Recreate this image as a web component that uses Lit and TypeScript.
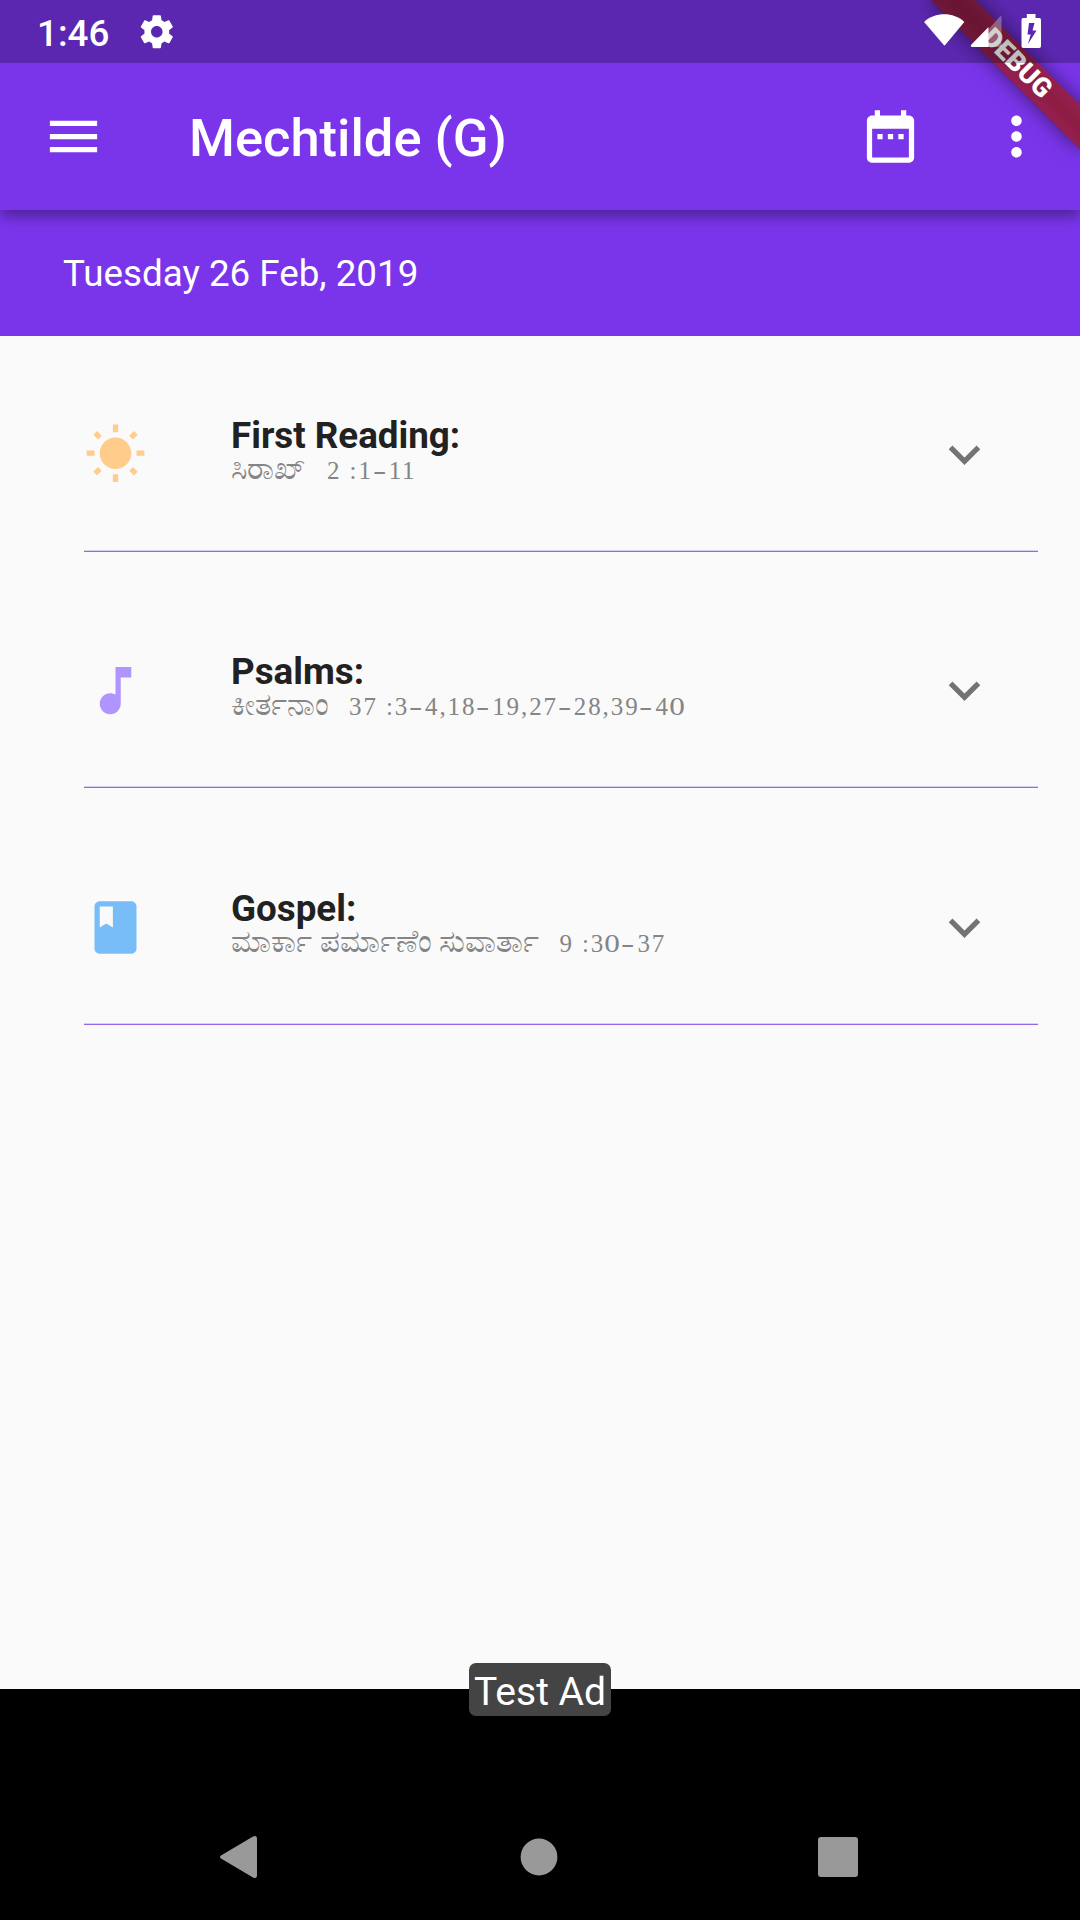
import { LitElement, html, css, svg } from "lit";
import { customElement, property } from "lit/decorators.js";

const icons: Record<string, string> = {
  menu: "M3 18h18v-2H3v2zm0-5h18v-2H3v2zm0-7v2h18V6H3z",
  dateRange:
    "M9 11H7v2h2v-2zm4 0h-2v2h2v-2zm4 0h-2v2h2v-2zm2-7h-1V2h-2v2H8V2H6v2H5c-1.11 0-1.99.9-1.99 2L3 20c0 1.1.89 2 2 2h14c1.1 0 2-.9 2-2V6c0-1.1-.9-2-2-2zm0 16H5V9h14v11z",
  moreVert:
    "M12 8c1.1 0 2-.9 2-2s-.9-2-2-2-2 .9-2 2 .9 2 2 2zm0 2c-1.1 0-2 .9-2 2s.9 2 2 2 2-.9 2-2-.9-2-2-2zm0 6c-1.1 0-2 .9-2 2s.9 2 2 2 2-.9 2-2-.9-2-2-2z",
  sunny:
    "M6.76 4.84l-1.8-1.79-1.41 1.41 1.79 1.79 1.42-1.41zM4 10.5H1v2h3v-2zm9-9.95h-2V3.5h2V.55zm7.45 3.91l-1.41-1.41-1.79 1.79 1.41 1.41 1.79-1.79zm-3.21 13.7l1.79 1.8 1.41-1.41-1.8-1.79-1.4 1.4zM20 10.5v2h3v-2h-3zm-8-5c-3.31 0-6 2.69-6 6s2.69 6 6 6 6-2.69 6-6-2.69-6-6-6zm-1 16.95h2V19.5h-2v2.95zm-7.45-3.91l1.41 1.41 1.79-1.8-1.41-1.41-1.79 1.8z",
  note: "M12 3v10.55c-.59-.34-1.27-.55-2-.55-2.21 0-4 1.79-4 4s1.79 4 4 4 4-1.79 4-4V7h4V3h-6z",
  book: "M18 2H6c-1.1 0-2 .9-2 2v16c0 1.1.9 2 2 2h12c1.1 0 2-.9 2-2V4c0-1.1-.9-2-2-2zM6 4h5v8l-2.5-1.5L6 12V4z",
  expand: "M16.59 8.59L12 13.17 7.41 8.59 6 10l6 6 6-6z",
  settings:
    "M19.43 12.98c.04-.32.07-.64.07-.98s-.03-.66-.07-.98l2.11-1.65c.19-.15.24-.42.12-.64l-2-3.46c-.12-.22-.39-.3-.61-.22l-2.49 1c-.52-.4-1.08-.73-1.69-.98l-.38-2.65C14.46 2.18 14.25 2 14 2h-4c-.25 0-.46.18-.49.42l-.38 2.65c-.61.25-1.17.59-1.69.98l-2.49-1c-.23-.09-.49 0-.61.22l-2 3.46c-.13.22-.07.49.12.64l2.11 1.65c-.04.32-.07.65-.07.98s.03.66.07.98l-2.11 1.65c-.19.15-.24.42-.12.64l2 3.46c.12.22.39.3.61.22l2.49-1c.52.4 1.08.73 1.69.98l.38 2.65c.03.24.24.42.49.42h4c.25 0 .46-.18.49-.42l.38-2.65c.61-.25 1.17-.59 1.69-.98l2.49 1c.23.09.49 0 .61-.22l2-3.46c.12-.22.07-.49-.12-.64l-2.11-1.65zM12 15.5c-1.93 0-3.5-1.57-3.5-3.5s1.57-3.5 3.5-3.5 3.5 1.57 3.5 3.5-1.57 3.5-3.5 3.5z",
};

@customElement("md-icon")
export class MdIcon extends LitElement {
  @property() name = "";

  static styles = css`
    :host {
      display: block;
      width: 63px;
      height: 63px;
      flex: none;
    }
    .glyph {
      display: block;
      width: 100%;
      height: 100%;
      fill: currentColor;
    }
  `;

  render() {
    return html`<svg class="glyph" viewBox="0 0 24 24">${svg`<path d=${icons[this.name] ?? ""}></path>`}</svg>`;
  }
}

interface Reading {
  icon: string;
  tone: string;
  title: string;
  book: string;
  verses: string;
}

const readings: Reading[] = [
  { icon: "sunny", tone: "sun", title: "First Reading:", book: "ಸಿರಾಖ್", verses: "2 :1-11" },
  { icon: "note", tone: "psalm", title: "Psalms:", book: "ಕೀರ್ತನಾಂ", verses: "37 :3-4,18-19,27-28,39-40" },
  { icon: "book", tone: "gospel", title: "Gospel:", book: "ಮಾರ್ಕಾ ಪರ್ಮಾಣೆಂ ಸುವಾರ್ತಾ", verses: "9 :30-37" },
];

@customElement("app-root")
export class AppRoot extends LitElement {
  static styles = css`
    :host {
      display: flex;
      flex-direction: column;
      position: relative;
      width: 1080px;
      height: 1920px;
      overflow: hidden;
      background: #fafafa;
      font-family: Roboto, "Liberation Sans", sans-serif;
      font-size: 36.75px;
    }
    .status {
      position: relative;
      z-index: 4;
      display: flex;
      align-items: center;
      box-sizing: border-box;
      flex: none;
      height: 63px;
      padding: 0 39px 0 37px;
      background: rgba(0, 0, 0, 0.25);
      color: #fff;
    }
    .time {
      font-weight: 500;
      line-height: 43px;
      padding-top: 4px;
      width: 100px;
    }
    .gear {
      width: 39.6px;
      height: 39.6px;
    }
    .signals {
      display: flex;
      margin-left: auto;
      margin-top: -1px;
      height: 34px;
      width: 117px;
    }
    .header {
      position: relative;
      z-index: 2;
      flex: none;
      display: flex;
      align-items: center;
      box-sizing: border-box;
      height: 210px;
      margin-top: -63px;
      padding: 63px 31.8px 0 42px;
      background: #7a35eb;
      color: #fff;
      box-shadow: 0 8px 12px -1px rgba(0, 0, 0, 0.34);
    }
    .title {
      margin-left: 84px;
      margin-right: auto;
      padding-top: 2px;
      font-size: 52.5px;
      font-weight: 500;
      line-height: 62px;
      white-space: nowrap;
    }
    .more {
      margin-left: 63px;
    }
    .date {
      flex: none;
      box-sizing: border-box;
      height: 126px;
      padding: 41.5px 63px 0;
      line-height: 43px;
      background: #7a35eb;
      color: #fff;
    }
    .list {
      flex: 1;
      display: flex;
      flex-direction: column;
      gap: 81.25px;
      padding: 61px 42px 0 84px;
    }
    .item {
      display: flex;
      box-sizing: border-box;
      height: 155px;
      padding: 26px 42px 0 0;
      border-bottom: 1px solid #9467e8;
      box-shadow: inset 0 -1px #dccdf8;
    }
    .sun {
      color: #ffcc8c;
    }
    .psalm {
      color: #b094ff;
    }
    .gospel {
      color: #79bdf8;
    }
    .copy {
      margin: -6px auto 0 84px;
      white-space: nowrap;
    }
    .name {
      font-weight: 700;
      line-height: 37px;
      color: #212121;
    }
    .passage {
      display: flex;
      align-items: baseline;
      gap: 20px;
      height: 30px;
      line-height: 30px;
      font-family: "Liberation Serif", serif;
      font-size: 25px;
      color: #858585;
    }
    .book {
      font-size: 30.8px;
    }
    .verses {
      letter-spacing: 1.9px;
    }
    .dash,
    .zero {
      display: inline-block;
      transform: scaleX(1.6);
      margin: 0 2.8px;
    }
    .zero {
      transform: scaleX(1.25);
      margin: 0 1px;
    }
    .chevron {
      color: #737373;
    }
    .bottom {
      position: relative;
      flex: none;
      display: flex;
      flex-direction: column;
      justify-content: flex-end;
      height: 231px;
      background: #000;
    }
    .ad {
      position: absolute;
      top: -26px;
      left: 469px;
      width: 142px;
      height: 53px;
      border-radius: 7px;
      background: #444;
      color: #fff;
      font-size: 39px;
      line-height: 58px;
      text-align: center;
      white-space: nowrap;
    }
    .nav {
      display: flex;
      justify-content: space-between;
      align-items: center;
      height: 126px;
      padding: 0 222px 0 219px;
    }
    .key {
      display: block;
      fill: #999;
    }
    .ribbon {
      position: absolute;
      z-index: 3;
      top: 73.5px;
      left: 975px;
      width: 210px;
      height: 31.5px;
      transform-origin: 105px -73.5px;
      transform: rotate(45deg);
      background: linear-gradient(rgba(183, 28, 28, 0.63), rgba(183, 28, 28, 0.63)),
        linear-gradient(rgba(0, 0, 0, 0.27), rgba(0, 0, 0, 0.44) 50%, rgba(0, 0, 0, 0.27));
      box-shadow: 0 0 20px rgba(0, 0, 0, 0.5);
      color: #fff;
      font-size: 26.8px;
      font-weight: 900;
      line-height: 31px;
      text-align: center;
    }
  `;

  private renderVerses(text: string) {
    return text
      .split(/([-0])/)
      .map((part) =>
        part === "-" ? html`<span class="dash">-</span>` : part === "0" ? html`<span class="zero">0</span>` : part,
      );
  }

  private renderItem(r: Reading) {
    return html`
      <div class="item">
        <md-icon class=${r.tone} name=${r.icon}></md-icon>
        <div class="copy">
          <div class="name">${r.title}</div>
          <div class="passage">
            <span class="book">${r.book}</span><span class="verses">${this.renderVerses(r.verses)}</span>
          </div>
        </div>
        <md-icon class="chevron" name="expand"></md-icon>
      </div>
    `;
  }

  render() {
    return html`
      <div class="status">
        <span class="time">1:46</span>
        <md-icon class="gear" name="settings"></md-icon>
        <svg class="signals" viewBox="924.5 14 117 34" fill="#fff">
          <path d="M944.7 45.5L924.6 22C935.5 11.8 954 11.8 964.8 22L945.5 45.2Q945 45.8 944.7 45.5Z" />
          <path d="M1002 17V47H989V29.3L1000.5 16.5Q1002 15.5 1002 17Z" opacity=".3" />
          <path d="M989 27V47H972.5Q970.5 46.7 971.5 45Z" />
          <path fill-rule="evenodd" d="M1027.3 14H1036V18H1039.7Q1041.5 18 1041.5 19.7V46.2Q1041.5 48 1039.7 48H1023.8Q1022 48 1022 46.2V19.7Q1022 18 1023.8 18H1027.3ZM1029.5 23L1028 34.5H1031.2L1028.5 44L1037 30.5H1033L1035 23Z" />
        </svg>
      </div>
      <div class="header">
        <md-icon name="menu"></md-icon>
        <span class="title">Mechtilde (G)</span>
        <md-icon name="dateRange"></md-icon>
        <md-icon class="more" name="moreVert"></md-icon>
      </div>
      <div class="date">Tuesday 26 Feb, 2019</div>
      <div class="list">${readings.map((r) => this.renderItem(r))}</div>
      <div class="bottom">
        <div class="ad">Test Ad</div>
        <div class="nav">
          <svg class="key" width="40" height="44" viewBox="0 0 40 44">
            <path d="M2 20.4L34 1.6Q38 -.4 38 4V40Q38 44.4 34 42.4L2 23.6Q0 22 2 20.4Z" />
          </svg>
          <svg class="key" width="38" height="38" viewBox="0 0 38 38"><circle cx="19" cy="19" r="18.4" /></svg>
          <svg class="key" width="40" height="40" viewBox="0 0 40 40"><rect width="40" height="40" rx="3" /></svg>
        </div>
      </div>
      <div class="ribbon">DEBUG</div>
    `;
  }
}
